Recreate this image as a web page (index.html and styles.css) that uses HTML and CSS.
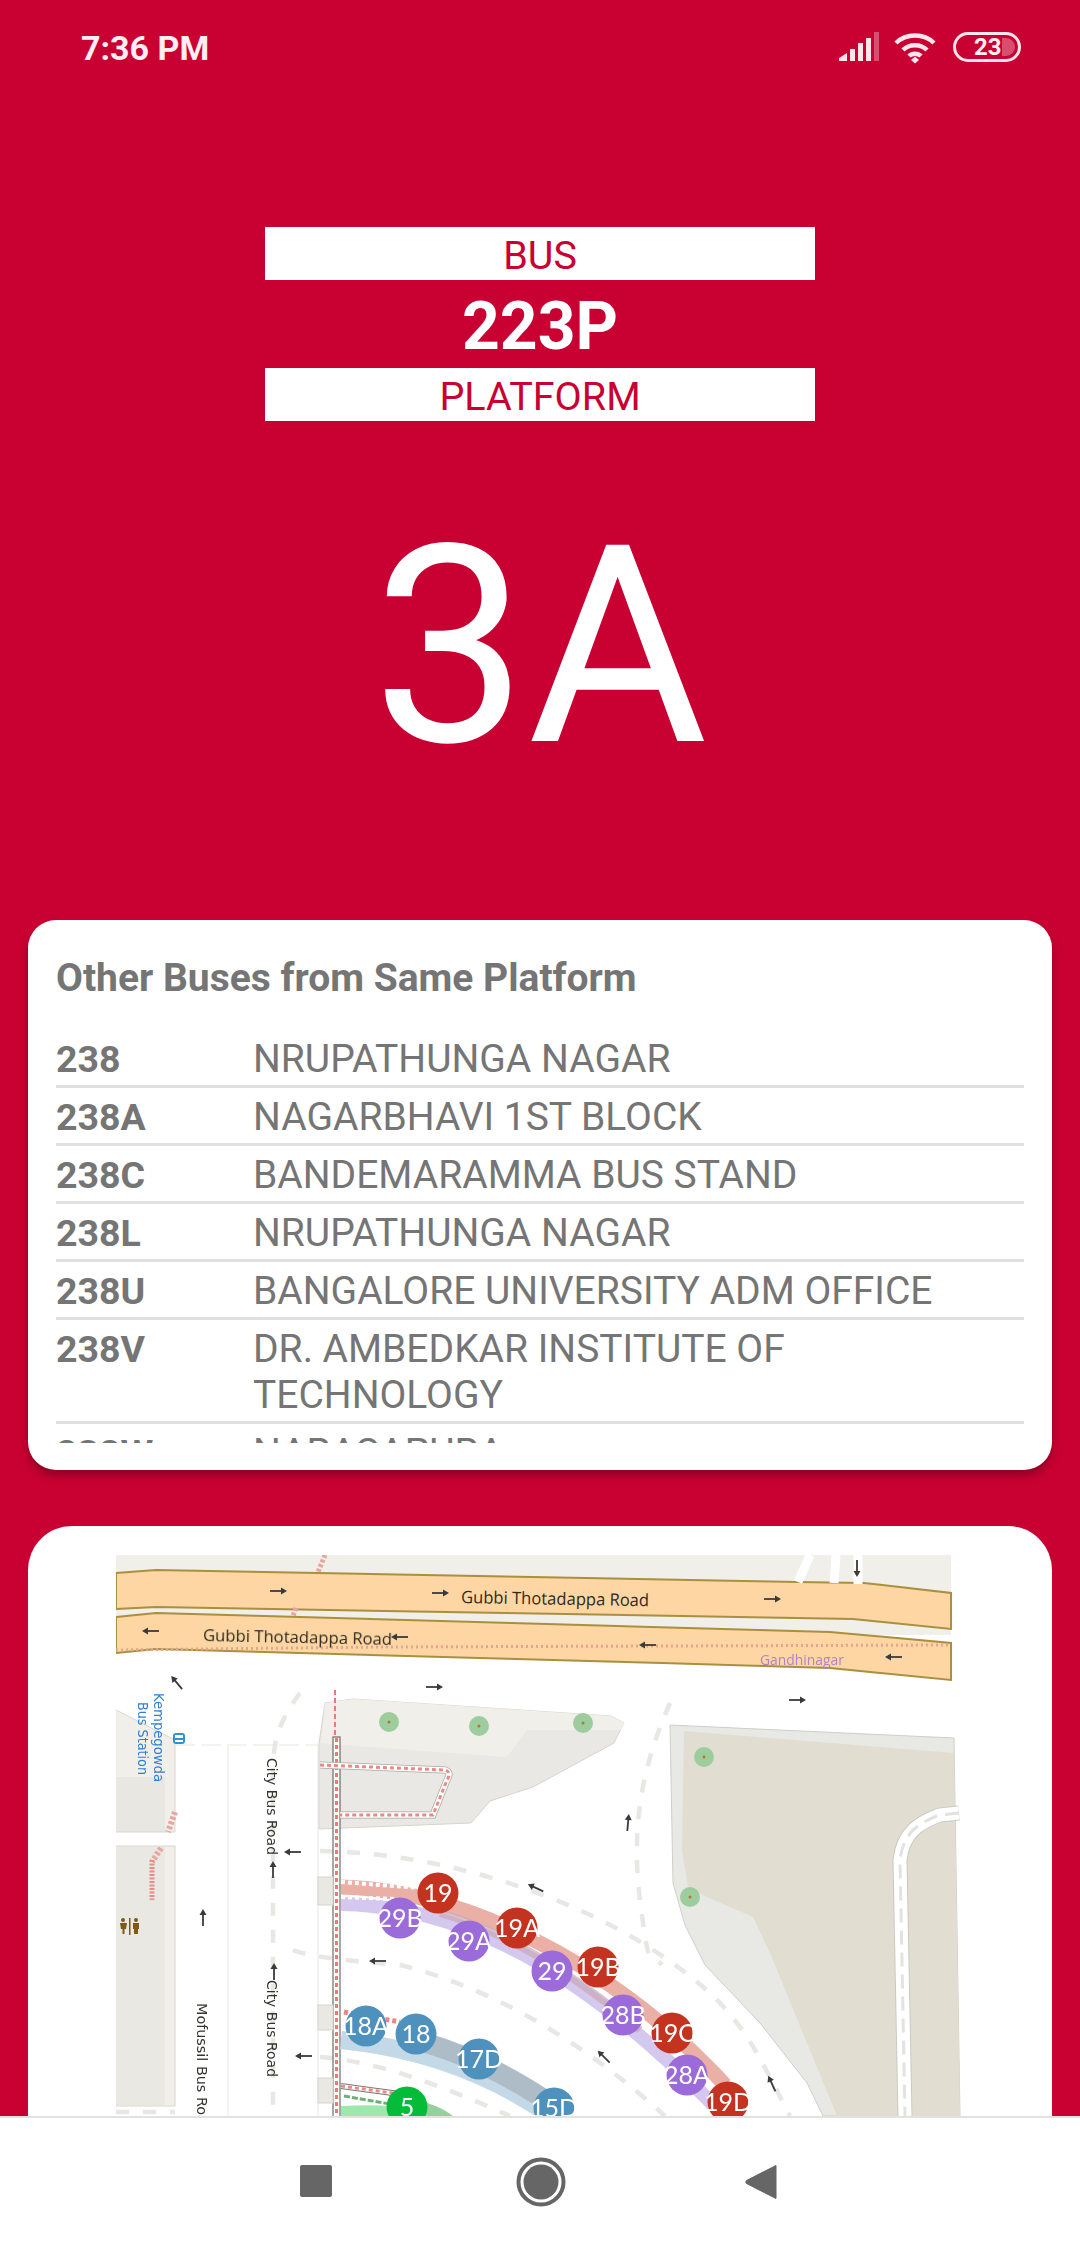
FILE: index.html
```html
<!DOCTYPE html>
<html lang="en">
<head>
<meta charset="utf-8">
<title>Bus 223P Platform</title>
<link rel="stylesheet" href="styles.css">
</head>
<body>
<div class="screen">
  <div class="content">
    <header class="status">
      <span class="time">7:36 PM</span>
      <div class="status-icons">
        <svg class="ic-signal" width="40" height="30" viewBox="0 0 40 30">
          <path d="M0 29V26L8 21V29Z" fill="#ffe6ec"/>
          <rect x="11" y="17" width="5" height="12" fill="#ffe6ec"/>
          <rect x="19" y="11" width="5" height="18" fill="#ffe6ec"/>
          <rect x="27" y="6" width="5" height="23" fill="#ffe6ec"/>
          <rect x="35" y="0" width="5" height="29" fill="#ffffff" opacity=".3"/>
        </svg>
        <svg class="ic-wifi" width="44" height="32" viewBox="0 0 44 32" fill="none" stroke="#ffe6ec" stroke-width="4.500">
          <path d="M3 11C13 1 31 1 41 11"/>
          <path d="M10 18C16 11.500 28 11.500 34 18"/>
          <path d="M16 24C19 21 25 21 28 24"/>
          <path d="M18 28L22 24.500L26 28L22 31.500Z" fill="#ffe6ec" stroke="none"/>
        </svg>
        <div class="battery">
          <span class="battery-num">23</span>
          <span class="battery-fill"></span>
        </div>
      </div>
    </header>

    <section class="hero">
      <div class="hero-bar">BUS</div>
      <div class="hero-bus">223P</div>
      <div class="hero-bar">PLATFORM</div>
      <div class="hero-platform">3A</div>
    </section>

    <section class="card list-card">
      <h2 class="list-title">Other Buses from Same Platform</h2>
      <div class="list">
        <div class="row"><span class="num">238</span><span class="dest">NRUPATHUNGA NAGAR</span></div>
        <div class="row"><span class="num">238A</span><span class="dest">NAGARBHAVI 1ST BLOCK</span></div>
        <div class="row"><span class="num">238C</span><span class="dest">BANDEMARAMMA BUS STAND</span></div>
        <div class="row"><span class="num">238L</span><span class="dest">NRUPATHUNGA NAGAR</span></div>
        <div class="row"><span class="num">238U</span><span class="dest">BANGALORE UNIVERSITY ADM OFFICE</span></div>
        <div class="row"><span class="num">238V</span><span class="dest">DR. AMBEDKAR INSTITUTE OF TECHNOLOGY</span></div>
        <div class="row"><span class="num">238W</span><span class="dest">NARASAPURA</span></div>
      </div>
    </section>

    <section class="card map-card">
      <svg class="map" width="846" height="600" viewBox="116 1555 846 600">
        <defs>
          <g id="arr">
            <path d="M-8 0H5" stroke="#3a3a3a" stroke-width="1.800" fill="none"/>
            <path d="M9 0L3 -3.500V3.500Z" fill="#3a3a3a"/>
          </g>
          <g id="tree">
            <circle r="10" fill="#9dcd9c"/>
            <circle r="1.500" fill="#b5743a"/>
          </g>
        </defs>

        <rect x="116" y="1555" width="835" height="80" fill="#f1efe9"/>

        <path d="M116 1573L156 1570L797 1582L864 1583L951 1593V1629L853 1619L156 1607L116 1609Z" fill="#fdd6a3" stroke="#a98f3e" stroke-width="2"/>
        <path d="M116 1617L156 1613L830 1632L951 1643V1680L830 1668L662 1663L156 1649L116 1653Z" fill="#fdd6a3" stroke="#a98f3e" stroke-width="2"/>
        <path d="M116 1650L381 1647L951 1645" stroke="#e3a58f" stroke-width="3" stroke-dasharray="2 3" fill="none"/>
        <path d="M325 1555L318 1572M296 1608L293 1616" stroke="#e5a7a0" stroke-width="5" stroke-dasharray="3 2" fill="none"/>
        <path d="M810 1555L798 1582M836 1555L834 1583M858 1555V1584" stroke="#fff" stroke-width="9" fill="none"/>

        <path d="M116 1710L175 1740V1832H116Z" fill="#f1efe9"/>
        <path d="M116 1777L165 1777V1832H116Z" fill="#e8e7e2"/>
        <path d="M116 1710L175 1740V1832H116" fill="none" stroke="#d8d6cf" stroke-width="1"/>
        <rect x="116" y="1846" width="59" height="260" fill="#f1efe9" stroke="#d8d6cf"/>
        <rect x="116" y="1847" width="49" height="258" fill="#e9e8e3"/>
        <path d="M175 1812L168 1832M161 1848L152 1862" stroke="#e5a7a0" stroke-width="6" stroke-dasharray="3 2" fill="none"/>
        <path d="M152 1860V1900" stroke="#e98d88" stroke-width="5" stroke-dasharray="2 1.500" fill="none"/>

        <path d="M228 1746V2116M318 1746V2116" stroke="#f0f0ee" stroke-width="1.500" fill="none"/>
        <path d="M175 1745H320" stroke="#efefec" stroke-width="1.500" stroke-dasharray="20 6" fill="none"/>

        <path d="M325 1703L353 1699L611 1716L624 1723L614 1743L533 1787L490 1801L471 1823L319 1829L319 1743Z" fill="#e9e8e4" stroke="#d5d4cd" stroke-width="1"/>
        <path d="M325 1703L353 1699L611 1716L624 1723L622 1730L527 1730L507 1757L342 1745L321 1743Z" fill="#f1efe9"/>

        <path d="M670 1725L954 1738L960 2116H823L807 2083L760 2023L705 1965L685 1925L673 1883Z" fill="#e8e8e4" stroke="#cfcfc8" stroke-width="1"/>
        <path d="M684 1731L954 1753L960 2116H837L770 1953L753 1917L707 1897L688 1887L682 1850Z" fill="#e1ded1"/>
        <path d="M959 1813L940 1815C920 1822 903 1832 900 1860L905 2116" fill="none" stroke="#c9c9c4" stroke-width="15"/>
        <path d="M959 1813L940 1815C920 1822 903 1832 900 1860L905 2116" fill="none" stroke="#fff" stroke-width="13"/>
        <path d="M959 1813L940 1815C920 1822 903 1832 900 1860L905 2116" fill="none" stroke="#e2e2de" stroke-width="3" stroke-dasharray="14 8"/>

        <g class="dash">
          <path d="M320 1851C430 1852 560 1890 650 1948S750 2040 790 2116"/>
          <path d="M293 1950Q310 1958 400 1965C480 1985 570 2030 665 2116"/>
          <path d="M320 2057C380 2062 440 2085 510 2116"/>
          <path d="M300 1693C280 1720 273 1740 273 1770V2116"/>
          <path d="M670 1703C645 1760 630 1820 640 1900S650 1950 662 1965"/>
          <path d="M116 2112H175"/>
        </g>

        <path d="M335 1690V2116" stroke="#ea7a78" stroke-width="2" stroke-dasharray="5 3" fill="none"/>
        <rect x="333" y="1737" width="7" height="380" fill="#fff" stroke="#6c6c68" stroke-width="1.200"/>
        <path d="M336.500 1738V2116" stroke="#ea7a78" stroke-width="3" stroke-dasharray="4 3" fill="none"/>
        <g class="stub">
          <rect x="318" y="1877" width="15" height="28"/>
          <rect x="318" y="2005" width="15" height="25"/>
          <rect x="318" y="2078" width="15" height="25"/>
        </g>

        <path d="M320 1765L445 1770Q452 1772 447 1780L433 1815H340" fill="none" stroke="#a8a8a2" stroke-width="7"/>
        <path d="M320 1765L445 1770Q452 1772 447 1780L433 1815H340" fill="none" stroke="#fff" stroke-width="5.500"/>
        <path d="M320 1765L445 1770Q452 1772 447 1780L433 1815H340" fill="none" stroke="#ea8a86" stroke-width="3" stroke-dasharray="4 3"/>

        <path d="M341 1904C460 1906 580 1965 724 2116" fill="none" stroke="#d4c8ee" stroke-width="14"/>
        <path d="M341 1887C460 1890 610 1960 725 2085" fill="none" stroke="#ebb0a5" stroke-width="15"/>
        <path d="M440 1913C500 1930 570 1970 640 2030" fill="none" stroke="#c9a8b8" stroke-width="8" opacity=".7"/>
        <path d="M341 1882L420 1888" fill="none" stroke="#fff" stroke-width="4" stroke-dasharray="4 3"/>
        <path d="M341 1897L395 1899" fill="none" stroke="#fff" stroke-width="4" stroke-dasharray="4 3"/>

        <path d="M341 2040C420 2048 500 2075 570 2130" fill="none" stroke="#c4d9e7" stroke-width="18"/>
        <path d="M400 2036C460 2050 510 2075 560 2110" fill="none" stroke="#aebcc7" stroke-width="20"/>
        <path d="M344 2012L400 2022" fill="none" stroke="#e58a82" stroke-width="5" stroke-dasharray="4 3"/>

        <path d="M341 2106C380 2104 420 2105 455 2125L341 2125Z" fill="#9fe8ad"/>
        <path d="M390 2095C420 2098 445 2108 455 2118L400 2118Z" fill="#93d29c"/>
        <path d="M341 2086L400 2094" fill="none" stroke="#777" stroke-width="6"/>
        <path d="M341 2086L400 2094" fill="none" stroke="#fff" stroke-width="4"/>
        <path d="M341 2086L400 2094" fill="none" stroke="#ea8a86" stroke-width="3" stroke-dasharray="4 3"/>
        <path d="M344 2096L390 2104" fill="none" stroke="#6fae7a" stroke-width="3" stroke-dasharray="6 2"/>

        <use href="#tree" x="389" y="1722"/>
        <use href="#tree" x="479" y="1726"/>
        <use href="#tree" x="583" y="1723"/>
        <use href="#tree" x="704" y="1757"/>
        <use href="#tree" x="690" y="1897"/>

        <use href="#arr" transform="translate(278 1591)"/>
        <use href="#arr" transform="translate(440 1593)"/>
        <use href="#arr" transform="translate(772 1599)"/>
        <use href="#arr" transform="translate(151 1631) rotate(180)"/>
        <use href="#arr" transform="translate(400 1637) rotate(180)"/>
        <use href="#arr" transform="translate(648 1645) rotate(180)"/>
        <use href="#arr" transform="translate(894 1657) rotate(180)"/>
        <use href="#arr" transform="translate(177 1683) rotate(-130)"/>
        <use href="#arr" transform="translate(434 1687)"/>
        <use href="#arr" transform="translate(797 1700)"/>
        <use href="#arr" transform="translate(857 1568) rotate(90)"/>
        <use href="#arr" transform="translate(628 1823) rotate(-85)"/>
        <use href="#arr" transform="translate(293 1852) rotate(180)"/>
        <use href="#arr" transform="translate(273 1870) rotate(-90)"/>
        <use href="#arr" transform="translate(203 1918) rotate(-90)"/>
        <use href="#arr" transform="translate(274 1972) rotate(-90)"/>
        <use href="#arr" transform="translate(536 1888) rotate(-155)"/>
        <use href="#arr" transform="translate(378 1961) rotate(180)"/>
        <use href="#arr" transform="translate(304 2056) rotate(180)"/>
        <use href="#arr" transform="translate(604 2057) rotate(-135)"/>
        <use href="#arr" transform="translate(772 2084) rotate(-115)"/>

        <text class="road" transform="translate(461 1603) rotate(1)" textLength="188" lengthAdjust="spacingAndGlyphs">Gubbi Thotadappa Road</text>
        <text class="road" transform="translate(203 1641) rotate(1.200)" textLength="189" lengthAdjust="spacingAndGlyphs">Gubbi Thotadappa Road</text>
        <text class="suburb" x="760" y="1665" textLength="84" lengthAdjust="spacingAndGlyphs">Gandhinagar</text>
        <text class="stn" transform="translate(154 1693) rotate(90)" textLength="89" lengthAdjust="spacingAndGlyphs">Kempegowda</text>
        <text class="stn" transform="translate(138 1702) rotate(90)" textLength="73" lengthAdjust="spacingAndGlyphs">Bus Station</text>
        <text class="street" transform="translate(267 1758) rotate(90)" textLength="97" lengthAdjust="spacingAndGlyphs">City Bus Road</text>
        <text class="street" transform="translate(267 1980) rotate(90)" textLength="97" lengthAdjust="spacingAndGlyphs">City Bus Road</text>
        <text class="street" transform="translate(197 2003) rotate(90)" textLength="130" lengthAdjust="spacingAndGlyphs">Mofussil Bus Road</text>

        <rect x="173" y="1733" width="12" height="11" rx="3" fill="#2b93d0"/>
        <rect x="175" y="1735" width="8" height="3" fill="#fff"/>
        <rect x="175" y="1740" width="8" height="2" fill="#fff"/>

        <g fill="#7d5c10">
          <circle cx="123" cy="1920" r="2"/>
          <path d="M120 1923H127L126 1929H121Z"/>
          <rect x="122.500" y="1929" width="2" height="5"/>
          <circle cx="136" cy="1920" r="2"/>
          <rect x="133" y="1923" width="6" height="6"/>
          <rect x="134" y="1929" width="4" height="5"/>
          <rect x="129" y="1918" width="1.500" height="17"/>
        </g>

        <g class="pin red">
          <circle cx="438" cy="1893" r="20.500"/><text x="438" y="1902">19</text>
          <circle cx="517" cy="1928" r="20.500"/><text x="517" y="1937">19A</text>
          <circle cx="598" cy="1967" r="20.500"/><text x="598" y="1976">19B</text>
          <circle cx="672" cy="2033" r="20.500"/><text x="672" y="2042">19C</text>
          <circle cx="728" cy="2102" r="20.500"/><text x="728" y="2111">19D</text>
        </g>
        <g class="pin purple">
          <circle cx="400" cy="1918" r="20.500"/><text x="400" y="1927">29B</text>
          <circle cx="469" cy="1941" r="20.500"/><text x="469" y="1950">29A</text>
          <circle cx="552" cy="1971" r="20.500"/><text x="552" y="1980">29</text>
          <circle cx="623" cy="2015" r="20.500"/><text x="623" y="2024">28B</text>
          <circle cx="687" cy="2075" r="20.500"/><text x="687" y="2084">28A</text>
        </g>
        <g class="pin blue">
          <circle cx="366" cy="2026" r="20.500"/><text x="366" y="2035">18A</text>
          <circle cx="416" cy="2034" r="20.500"/><text x="416" y="2043">18</text>
          <circle cx="479" cy="2059" r="20.500"/><text x="479" y="2068">17D</text>
          <circle cx="554" cy="2108" r="20.500"/><text x="554" y="2117">15D</text>
        </g>
        <g class="pin green">
          <circle cx="407" cy="2107" r="20.500"/><text x="407" y="2116">5</text>
        </g>
      </svg>
    </section>
  </div>

  <nav class="navbar">
    <svg width="32" height="32" viewBox="0 0 32 32" class="nav-square"><rect width="32" height="32" rx="2" fill="#666"/></svg>
    <svg width="50" height="50" viewBox="0 0 50 50" class="nav-home">
      <circle cx="25" cy="25" r="22.500" fill="none" stroke="#666" stroke-width="4"/>
      <circle cx="25" cy="25" r="17.500" fill="#666"/>
    </svg>
    <svg width="32" height="36" viewBox="0 0 32 36" class="nav-back"><path d="M31 1.500V34.500L1.500 19.500Q0 18 1.500 16.500Z" fill="#666" stroke="#666" stroke-linejoin="round"/></svg>
  </nav>
</div>
</body>
</html>
```

FILE: styles.css
```css
* { box-sizing: border-box; }
html, body { margin: 0; padding: 0; }
body { font-family: Roboto, "Liberation Sans", sans-serif; background: #c90032; }

.screen {
  width: 1080px;
  height: 2246px;
  display: flex;
  flex-direction: column;
  overflow: hidden;
  background: #c90032;
}
.content { flex: 1; min-height: 0; overflow: hidden; }

.status {
  height: 94px;
  display: flex;
  align-items: flex-start;
  justify-content: space-between;
  padding: 26px 59px 0 81px;
  color: #ffeef2;
}
.time { font-size: 34px; font-weight: 700; line-height: 44px; }
.status-icons { display: flex; align-items: flex-start; padding-top: 6px; }
.ic-signal { margin-right: 14px; }
.ic-wifi { margin-right: 16px; }
.battery {
  width: 68px;
  height: 30px;
  border: 3px solid #ffe6ec;
  border-radius: 15px;
  display: flex;
  align-items: center;
  padding-left: 18px;
}
.battery-num { font-size: 24px; font-weight: 700; line-height: 24px; color: #ffeef2; width: 28px; }
.battery-fill {
  width: 13px;
  height: 18px;
  background: rgba(255,255,255,.3);
  border-radius: 0 9px 9px 0;
}

.hero {
  display: flex;
  flex-direction: column;
  align-items: center;
  padding-top: 133px;
  height: 826px;
}
.hero-bar {
  width: 550px;
  height: 53px;
  background: #fff;
  color: #c90032;
  font-size: 39.500px;
  line-height: 57px;
  text-align: center;
}
.hero-bus {
  height: 88px;
  color: #fff;
  font-size: 66px;
  font-weight: 700;
  line-height: 94px;
  text-align: center;
}
.hero-platform {
  color: #fff;
  font-size: 276px;
  line-height: 320px;
  margin-top: 66px;
  text-align: center;
}

.card { background: #fff; margin: 0 28px; }
.list-card {
  height: 550px;
  border-radius: 28px;
  padding: 24px 28px 27px;
  box-shadow: 0 6px 9px rgba(0,0,0,.28);
  display: flex;
  flex-direction: column;
}
.list-title {
  margin: 0;
  height: 86px;
  color: #757575;
  font-size: 39px;
  font-weight: 700;
  line-height: 68px;
}
.list { flex: 1; min-height: 0; overflow: hidden; }
.row {
  display: flex;
  border-bottom: 3px solid #e0e0e0;
  padding: 6px 0 3px;
  color: #757575;
  font-size: 39px;
  line-height: 46px;
}
.num { width: 197px; flex: none; font-weight: 700; font-size: 37.500px; }
.dest { flex: 1; font-weight: 400; }

.map-card {
  margin-top: 56px;
  height: 640px;
  border-radius: 44px;
  padding: 29px 0 0 88px;
}
.map { display: block; filter: blur(.4px); }
.dash path { fill: none; stroke: #e7e7e4; stroke-width: 4.500; stroke-dasharray: 13 14; }
.stub rect { fill: #e9e8e3; stroke: #d5d4cd; }
.road { font-family: "Open Sans", sans-serif; font-size: 17px; fill: #2e2a20; }
.suburb { font-family: "Open Sans", sans-serif; font-size: 14px; fill: #b083c9; }
.stn { font-family: "DejaVu Sans", sans-serif; font-size: 14px; fill: #2f7fd6; }
.street { font-family: "DejaVu Sans", sans-serif; font-size: 14.500px; fill: #33332f; }
.pin text { font-family: Lato, sans-serif; font-size: 25px; fill: #fff; text-anchor: middle; }
.red circle { fill: #c43320; }
.purple circle { fill: #9a6bd9; }
.blue circle { fill: #4f91bd; }
.green circle { fill: #05bb3a; }

.navbar {
  flex: none;
  height: 130px;
  background: #fff;
  border-top: 2px solid #e2e2e2;
  position: relative;
  display: flex;
  align-items: flex-start;
  padding: 39px 0 0 300px;
}
.nav-square { margin: 8px 0 0 0; }
.nav-home { margin: 0 0 0 184px; }
.nav-back { margin: 7px 0 0 179px; }
```
